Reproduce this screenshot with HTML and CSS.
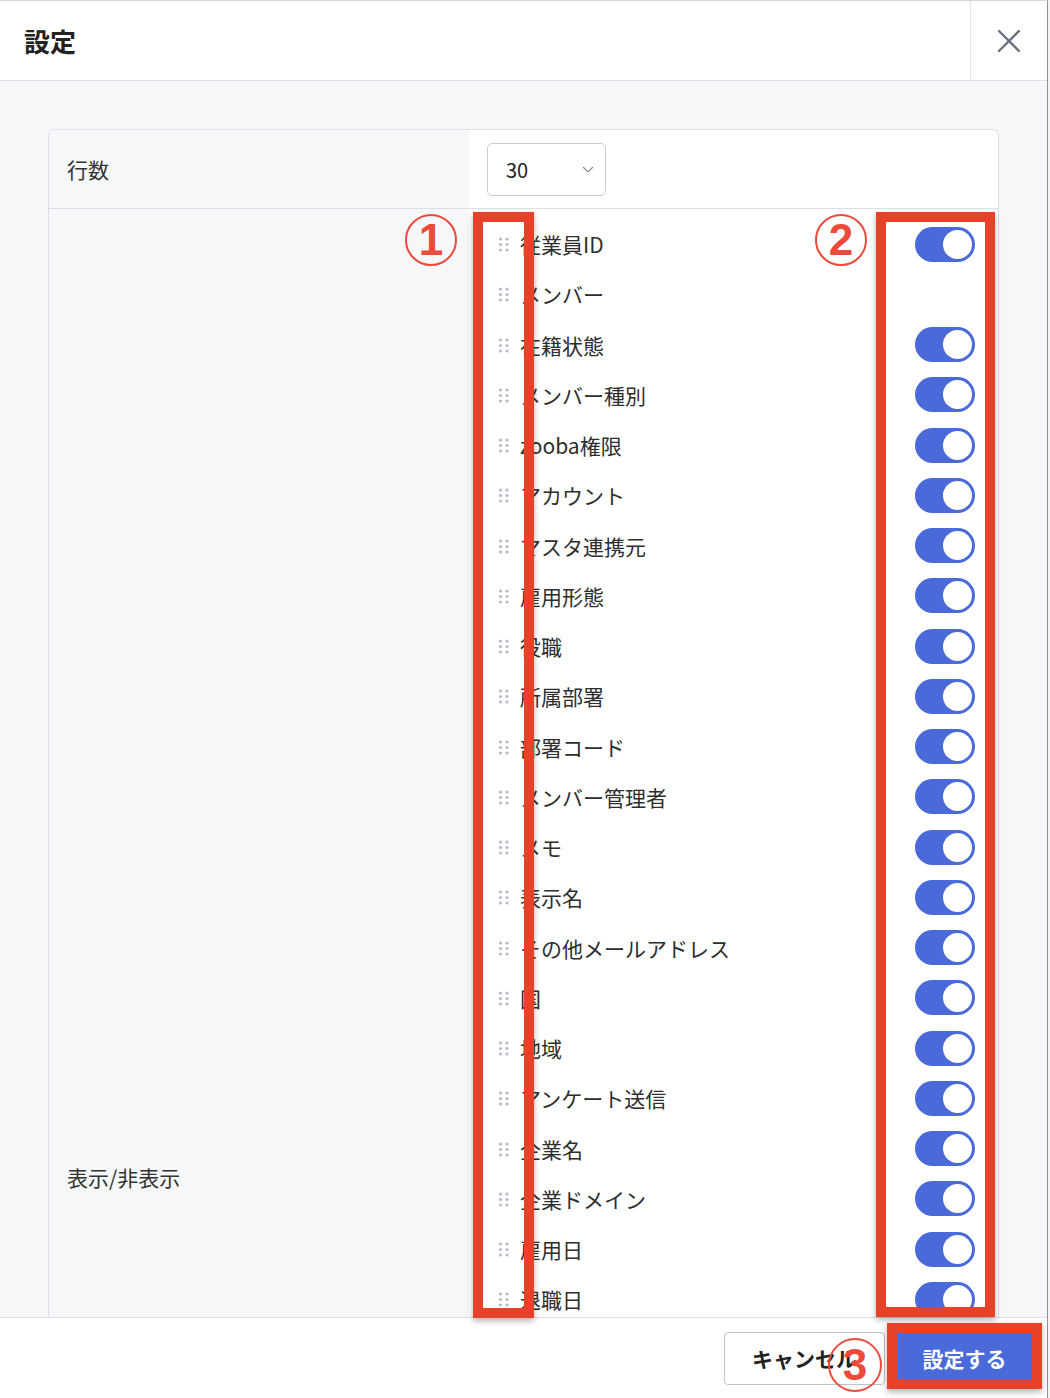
FILE: index.html
```html
<!DOCTYPE html>
<html lang="ja">
<head>
    <meta charset="UTF-8">
    <meta name="viewport" content="width=device-width, initial-scale=1.0">
    <title>設定</title>
    <link rel="stylesheet" href="styles.css">
</head>
<body>
    <div class="modal">
        <div class="modal-header">
            <h1 class="modal-title">設定</h1>
            <button class="close-btn" aria-label="閉じる">
                <svg width="24" height="24" viewBox="0 0 24 24"><path d="M2 2 L22 22 M22 2 L2 22" stroke="#6b7080" stroke-width="2.4" stroke-linecap="round" fill="none"/></svg>
            </button>
        </div>

        <div class="modal-body">
            <div class="settings-card">
                <div class="setting-row row-rows">
                    <div class="setting-label">行数</div>
                    <div class="setting-value">
                        <div class="select">
                            <span>30</span>
                            <svg width="12" height="7" viewBox="0 0 12 7"><path d="M1 1 L6 6 L11 1" stroke="#8a8f9a" stroke-width="1.2" fill="none"/></svg>
                        </div>
                    </div>
                </div>
                <div class="setting-row">
                    <div class="setting-label">表示/非表示</div>
                    <div class="setting-value">
                        <ul class="column-list" id="columnList"></ul>
                    </div>
                </div>
            </div>
        </div>

        <div class="modal-footer">
            <button class="btn btn-cancel">キャンセル</button>
            <button class="btn btn-primary">設定する</button>
        </div>

        <!-- annotations -->
        <div class="mark-box mark-handles"></div>
        <div class="mark-box mark-toggles"></div>
        <div class="mark-box mark-submit"></div>
        <div class="mark-num num-1">1</div>
        <div class="mark-num num-2">2</div>
        <div class="mark-num num-3">3</div>
    </div>

    <script>
        const columns = [
            { name: '従業員ID', toggle: true },
            { name: 'メンバー', toggle: false },
            { name: '在籍状態', toggle: true },
            { name: 'メンバー種別', toggle: true },
            { name: 'zooba権限', toggle: true },
            { name: 'アカウント', toggle: true },
            { name: 'マスタ連携元', toggle: true },
            { name: '雇用形態', toggle: true },
            { name: '役職', toggle: true },
            { name: '所属部署', toggle: true },
            { name: '部署コード', toggle: true },
            { name: 'メンバー管理者', toggle: true },
            { name: 'メモ', toggle: true },
            { name: '表示名', toggle: true },
            { name: 'その他メールアドレス', toggle: true },
            { name: '国', toggle: true },
            { name: '地域', toggle: true },
            { name: 'アンケート送信', toggle: true },
            { name: '企業名', toggle: true },
            { name: '企業ドメイン', toggle: true },
            { name: '雇用日', toggle: true },
            { name: '退職日', toggle: true },
            { name: '入社日', toggle: true },
            { name: '生年月日', toggle: true },
            { name: '性別', toggle: true },
            { name: '電話番号', toggle: true },
            { name: '携帯電話番号', toggle: true },
            { name: '住所', toggle: true },
            { name: '勤務地', toggle: true },
            { name: '上長', toggle: true },
            { name: '等級', toggle: true },
            { name: '社員区分', toggle: true },
            { name: '言語', toggle: true },
            { name: 'タイムゾーン', toggle: true },
            { name: '最終ログイン日時', toggle: true },
            { name: '登録日', toggle: true },
            { name: '更新日', toggle: true },
            { name: '備考', toggle: true }
        ];

        const handleSvg = `
            <svg class="drag-handle" width="12" height="16" viewBox="0 0 12 16">
                <circle cx="2.5" cy="3" r="1.6"/><circle cx="9" cy="3" r="1.6"/>
                <circle cx="2.5" cy="8.5" r="1.6"/><circle cx="9" cy="8.5" r="1.6"/>
                <circle cx="2.5" cy="14" r="1.6"/><circle cx="9" cy="14" r="1.6"/>
            </svg>`;

        const list = document.getElementById('columnList');
        columns.forEach(col => {
            const li = document.createElement('li');
            li.className = 'column-item';
            li.innerHTML = `
                ${handleSvg}
                <span class="column-name">${col.name}</span>
                ${col.toggle ? '<span class="toggle is-on"><span class="toggle-knob"></span></span>' : ''}
            `;
            list.appendChild(li);
        });
    </script>
</body>
</html>
```

FILE: styles.css
```css
body {
    margin: 0;
    background-color: #f3f4f6;
    font-family: "Noto Sans CJK JP", "Noto Sans", sans-serif;
    color: #333;
}
.modal {
    position: relative;
    width: 1048px;
    height: 1398px;
    box-sizing: border-box;
    background: #fff;
    border-top: 1px solid #d2d5dc;
    border-right: 1px solid #8d9096;
    display: flex;
    flex-direction: column;
}
.modal-header {
    height: 79px;
    flex-shrink: 0;
    display: flex;
    align-items: center;
    border-bottom: 1px solid #dcdfe6;
}
.modal-title {
    flex: 1;
    margin: 0;
    padding-left: 24px;
    font-size: 26px;
    font-weight: 700;
    color: #222;
}
.close-btn {
    width: 77px;
    height: 79px;
    padding: 0;
    border: none;
    border-left: 1px solid #e3e5ea;
    background: none;
    display: flex;
    align-items: center;
    justify-content: center;
    cursor: pointer;
}
.modal-body {
    flex: 1;
    min-height: 0;
    overflow: hidden;
    background: #f6f7f9;
    padding: 48px 48px 0 48px;
}
.settings-card {
    background: #fff;
    border: 1px solid #dcdfe6;
    border-radius: 6px;
    overflow: hidden;
}
.setting-row {
    display: grid;
    grid-template-columns: 420px 1fr;
}
.setting-row + .setting-row {
    border-top: 1px solid #dcdfe6;
}
.setting-label {
    background: #f6f7f9;
    padding-left: 18px;
    display: flex;
    align-items: center;
    font-size: 21px;
    color: #333;
}
.row-rows {
    height: 78px;
}
.row-rows .setting-value {
    display: flex;
    align-items: center;
    padding-left: 18px;
}
.select {
    width: 119px;
    height: 53px;
    box-sizing: border-box;
    border: 1px solid #c6cad2;
    border-radius: 5px;
    display: flex;
    align-items: center;
    justify-content: space-between;
    padding: 0 11px 0 18px;
    font-size: 20px;
    color: #222;
}
.column-list {
    list-style: none;
    margin: 0;
    padding: 10px 23px 16px 29px;
}
.column-item {
    height: 50.25px;
    display: flex;
    align-items: center;
}
.drag-handle {
    fill: #b7bbc7;
    margin-right: 10px;
    flex-shrink: 0;
}
.column-name {
    flex: 1;
    font-size: 21px;
    color: #2e2e2e;
}
.toggle {
    width: 60px;
    height: 35px;
    border-radius: 18px;
    background: #4a6ad9;
    display: flex;
    align-items: center;
    justify-content: flex-end;
    padding-right: 3px;
    box-sizing: border-box;
}
.toggle-knob {
    width: 29px;
    height: 29px;
    border-radius: 50%;
    background: #fff;
}
.modal-footer {
    height: 80px;
    flex-shrink: 0;
    border-top: 1px solid #dcdfe6;
    display: flex;
    justify-content: flex-end;
    align-items: center;
    gap: 8px;
    padding-right: 11px;
}
.btn {
    height: 53px;
    border-radius: 4px;
    font-family: inherit;
    font-size: 21px;
    font-weight: 700;
    cursor: pointer;
}
.btn-cancel {
    width: 161px;
    background: #fff;
    border: 1px solid #bfc3cc;
    color: #222;
}
.btn-primary {
    width: 143px;
    background: #4a6ad9;
    border: none;
    color: #fff;
}
.mark-box {
    position: absolute;
    box-sizing: border-box;
    border: 10px solid #e8412a;
    box-shadow: 0 3px 6px rgba(0, 0, 0, 0.3);
}
.mark-handles {
    left: 473px;
    top: 211px;
    width: 61px;
    height: 1106px;
}
.mark-toggles {
    left: 876px;
    top: 211px;
    width: 119px;
    height: 1105px;
}
.mark-submit {
    left: 887px;
    top: 1322px;
    width: 155px;
    height: 66px;
}
.mark-num {
    position: absolute;
    width: 52px;
    height: 52px;
    box-sizing: border-box;
    border: 2.5px solid #ec4b3b;
    border-radius: 50%;
    display: flex;
    align-items: center;
    justify-content: center;
    color: #ec4b3b;
    font-family: "Liberation Sans", sans-serif;
    font-weight: 700;
    font-size: 44px;
    line-height: 1;
}
.num-1 {
    left: 405px;
    top: 213px;
}
.num-2 {
    left: 815px;
    top: 213px;
}
.num-3 {
    left: 828px;
    top: 1337px;
    width: 54px;
    height: 54px;
}
```
